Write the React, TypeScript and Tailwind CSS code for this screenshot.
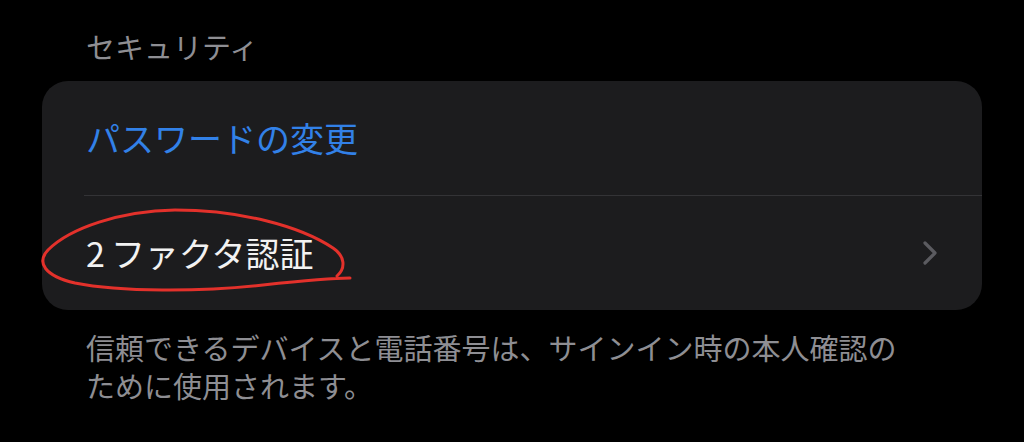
import React from "react";

const font = { fontFamily: '"Noto Sans CJK JP", "Noto Sans", sans-serif' };

function Chevron() {
  return (
    <svg width="16" height="26" viewBox="0 0 16 26" fill="none">
      <path
        d="M3 3 L13 13 L3 23"
        stroke="#5b5b60"
        strokeWidth="3.2"
        strokeLinecap="round"
        strokeLinejoin="round"
      />
    </svg>
  );
}

export default function App() {
  return (
    <div
      className="relative w-full h-[442px] bg-black px-[42px] overflow-hidden"
      style={font}
    >
      <p className="pt-[28px] pl-[44px] text-[29px] leading-[36px] text-[#8e8e93]">
        セキュリティ
      </p>

      <div className="mt-[17px] w-[940px] rounded-[26px] bg-[#1c1c1e]">
        <div className="h-[114px] pl-[44px] flex items-center">
          <span className="text-[34px] leading-none text-[#3281e8]">
            パスワードの変更
          </span>
        </div>
        <div className="ml-[42px] h-px bg-[#333336]" />
        <div className="h-[114px] pl-[44px] pr-[44px] flex items-center justify-between">
          <span className="text-[34px] leading-none text-[#f2f2f2]">
            <span className="mr-[6px]">2</span>ファクタ認証
          </span>
          <Chevron />
        </div>
      </div>

      <div className="mt-[18px] pl-[44px] text-[29px] leading-[38px] text-[#8e8e93] whitespace-nowrap">
        <p>信頼できるデバイスと電話番号は、サインイン時の本人確認の</p>
        <p>ために使用されます。</p>
      </div>

      <svg
        className="absolute inset-0 pointer-events-none"
        width="1024"
        height="442"
        viewBox="0 0 1024 442"
        fill="none"
      >
        <path
          d="M337 276 C346 268, 345 256, 333 248 C300 226, 240 210, 175 210 C120 211, 70 228, 48 250 C36 263, 45 276, 75 283 C120 292, 200 292, 263 285 C300 281, 330 278, 350 278"
          stroke="#e3312b"
          strokeWidth="3"
          strokeLinecap="round"
          strokeLinejoin="round"
        />
      </svg>
    </div>
  );
}
